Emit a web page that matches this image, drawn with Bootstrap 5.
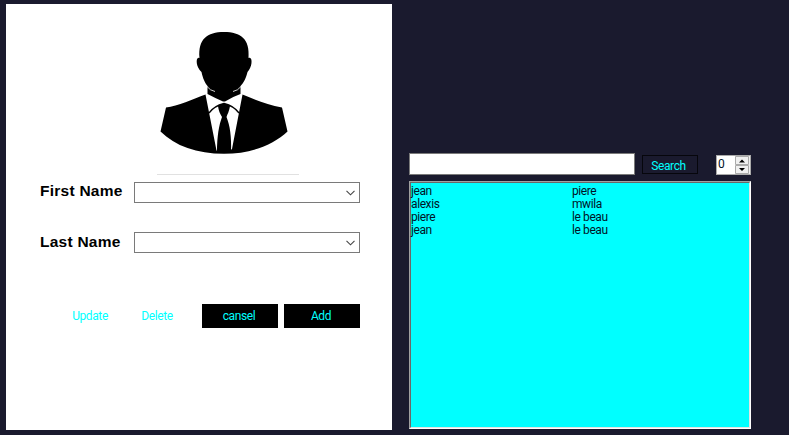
<!DOCTYPE html>
<html lang="en">
<head>
<meta charset="utf-8">
<meta name="viewport" content="width=device-width, initial-scale=1">
<title>Contacts</title>
<link href="https://cdn.jsdelivr.net/npm/bootstrap@5.3.0/dist/css/bootstrap.min.css" rel="stylesheet">
<style>
body{background:#1a1a2e;font:12px/13px Roboto,"Liberation Sans",sans-serif;color:#001428;height:435px;padding:4px 0 0 6px;letter-spacing:-.4px}
.editor{width:386px;height:426px;background:#fff}
.portrait{width:142px;height:171px;margin-left:151px;border-bottom:1px solid #e1e1e1}
.portrait svg{display:block}
.field{height:21px;margin-left:34px}
.field-first{margin-top:7px}
.field-last{margin-top:29px}
.field label{width:94px;font:700 15.5px/18px "Liberation Sans",Arial,sans-serif;color:#000;letter-spacing:.25px;white-space:nowrap}
.field-last label{padding-top:1px}
.combo{width:226px;height:21px;border:1px solid #7a7a7a;padding-right:4px}
.actions{margin:51px 32px 0 0;gap:6px}
.act{width:76px;height:24px;border:0;border-radius:0;padding:0 2px 0 0;font-size:12px;line-height:24px;color:#0ff;letter-spacing:inherit}
.act.solid{background:#000}
.act.upd{width:66px;margin-right:-10px}
.finder{width:342px;margin-left:17px;padding-top:149px}
.query{width:226px;height:22px;background:#fff;border:1px solid #7a7a7a;border-radius:0;padding:0}
.find{width:56px;height:19px;margin:2px 18px 0 7px;border:1px solid #06060c;border-radius:0;padding:0 3px 0 0;font-size:12px;line-height:20px;color:#0ff;letter-spacing:inherit}
.spin{width:35px;height:20px;margin-top:2px;background:#fff;border:1px solid #aaa;font-size:12px;line-height:17px;padding-left:1px}
.results{width:342px;height:248px;margin-top:6px;background:#0ff;border:1px solid;border-color:#a0a0a0 #fff #fff #a0a0a0}
.results-in{height:246px;border:1px solid;border-color:#696969 #e3e3e3 #e3e3e3 #696969;padding-top:2px}
.results .first{width:161px}
</style>
<script src="https://cdn.jsdelivr.net/npm/bootstrap@5.3.0/dist/js/bootstrap.bundle.min.js"></script>
</head>
<body class="d-flex align-items-start overflow-hidden">
<main class="editor flex-shrink-0">
  <div class="portrait">
    <svg width="142" height="170" viewBox="157 4 142 170" aria-hidden="true">
      <path d="M199.500 58C198 39 207 32 224 32C241 32 250 39 248.500 58C253 56 252.500 67 247.500 72C245 83 238 93 224 93C210 93 204 84 201.500 72C195.500 67 195.500 56 199.500 58Z"/>
      <path d="M207.500 86Q213 91 224 92Q235 91 240.500 86V94Q232 97 225 101.500H223Q215 98 207.500 94Z"/>
      <path d="M166 107.500C178 106 193 99 205.500 94.500L216.500 150.500L220 152H228L232 149L242.500 94.500C256 100 268 105 282 107.500L287.500 131.500C273 145 251 153.800 224 153.800C197 153.800 175 146 160.500 131.500Z"/>
      <path d="M218 106Q224 101.500 230 106C229 112 227.500 114 226.500 117C230 126 231.500 136 231 152.500H217C217 136 219 125 222 117C220 114 218.500 110 218 106Z"/>
      <path d="M209 113Q214 106 224 103.500Q234 106 239 113" fill="none" stroke="#000" stroke-width="1.300"/>
      <path d="M207 86.500Q210 90.500 215 91.500M241 86.500Q238 90.500 233 91.500" fill="none" stroke="#fff" stroke-width=".8"/>
    </svg>
  </div>
  <div class="field field-first d-flex"><label>First Name</label>
    <div class="combo d-flex align-items-center justify-content-end"><svg width="9" height="6" viewBox="0 0 9 6"><path d="M.5.8l4 4 4-4" fill="none" stroke="#444" stroke-width="1.100"/></svg></div></div>
  <div class="field field-last d-flex"><label>Last Name</label>
    <div class="combo d-flex align-items-center justify-content-end"><svg width="9" height="6" viewBox="0 0 9 6"><path d="M.5.8l4 4 4-4" fill="none" stroke="#444" stroke-width="1.100"/></svg></div></div>
  <div class="actions d-flex justify-content-end">
    <button class="btn act upd">Update</button>
    <button class="btn act">Delete</button>
    <button class="btn act solid">cansel</button>
    <button class="btn act solid">Add</button>
  </div>
</main>
<section class="finder flex-shrink-0">
  <div class="d-flex align-items-start">
    <input class="query" aria-label="Search text">
    <button class="btn find">Search</button>
    <div class="spin d-flex justify-content-between"><span>0</span>
      <svg width="15" height="18" viewBox="0 0 15 18"><path d="M0 0h15v18H0z" fill="#f0f0f0"/><path d="M.5.5h13v8H.5zM.5 9.500h13v8H.5z" fill="#f0f0f0" stroke="#aaa"/><path d="M4 6.500h6L7 3.500zM4 12h6l-3 3z"/></svg>
    </div>
  </div>
  <div class="results"><div class="results-in">
    <div class="d-flex"><span class="first">jean</span><span>piere</span></div>
    <div class="d-flex"><span class="first">alexis</span><span>mwila</span></div>
    <div class="d-flex"><span class="first">piere</span><span>le beau</span></div>
    <div class="d-flex"><span class="first">jean</span><span>le beau</span></div>
  </div></div>
</section>
</body>
</html>
